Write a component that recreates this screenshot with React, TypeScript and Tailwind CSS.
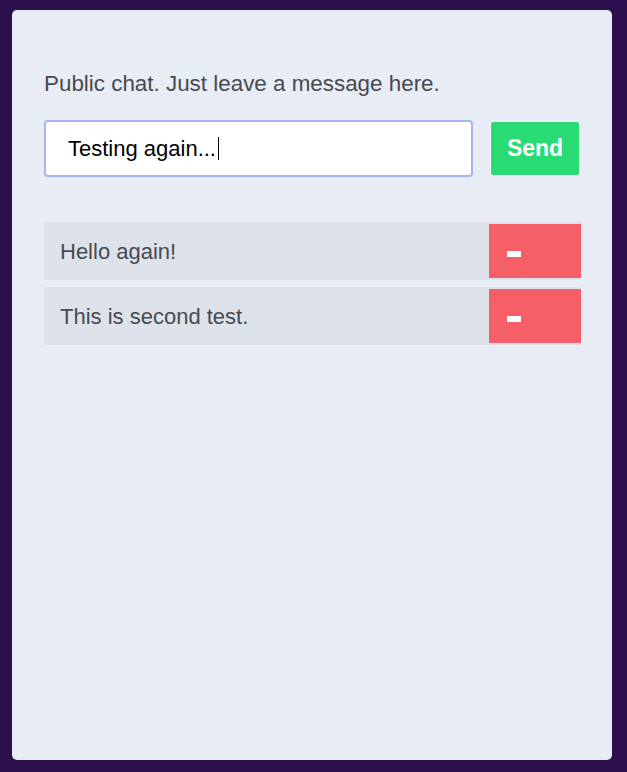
import { useState } from 'react'

const messages = ['Hello again!', 'This is second test.']

export default function App() {
	const [text, setText] = useState('Testing again...')

	return (
		<main className="w-full h-[772px] bg-[#2d0f4e] pt-[10px] px-[12px] font-['Liberation_Sans',Arial,sans-serif]">
			<section className="w-[600px] h-[750px] bg-[#e8edf5] rounded-[5px] pt-[61px] pl-[32px] pr-[31px]">
				<p className="text-[22.4px] leading-[26px] text-[#474a50]">Public chat. Just leave a message here.</p>
				<div className="flex flex-row items-center justify-between mt-[23px]">
					<div className="relative">
						<input
							value={text}
							onChange={(e) => setText(e.target.value)}
							className="w-[429px] h-[57px] bg-white border-2 border-[#a6b5f2] rounded-[4px] pl-[22px] text-[22px] text-black outline-none"
						/>
						{/* blinking caret as it shows in the screenshot */}
						<span className="absolute left-[174px] top-[17px] w-[1px] h-[23px] bg-black"></span>
					</div>
					<button className="w-[90px] h-[55px] bg-[#2adb74] border border-[#f2fff7] rounded-[3px] text-white font-bold text-[23px] mr-[1px]">
						Send
					</button>
				</div>
				<ul className="mt-[45px] flex flex-col gap-[7px]">
					{messages.map((m) => (
						<li key={m} className="h-[58px] bg-[#dde2ea] flex flex-row items-center justify-between">
							<span className="pl-[16px] text-[22px] text-[#474a50]">{m}</span>
							<button className="w-[92px] h-[54px] bg-[#f55f67] flex items-center pl-[18px]">
								<span className="block w-[14px] h-[6px] bg-white mt-[6px]"></span>
							</button>
						</li>
					))}
				</ul>
			</section>
		</main>
	)
}
